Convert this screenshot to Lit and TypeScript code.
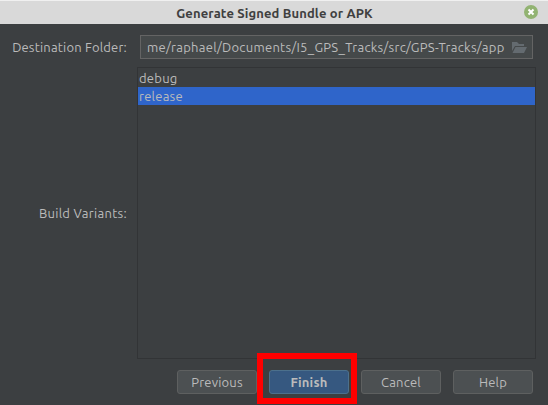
import { LitElement, html, css } from "lit";
import { customElement } from "lit/decorators.js";

@customElement("app-root")
export class AppRoot extends LitElement {
  static styles = css`
    :host {
      display: flex;
      flex-direction: column;
      box-sizing: border-box;
      width: 548px;
      height: 405px;
      overflow: hidden;
      background: #3c3f41;
      color: #bbbbbb;
      font: 13px/18px "Ubuntu", "Noto Sans", sans-serif;
      white-space: nowrap;
    }
    *, *::after { box-sizing: border-box; }
    .title {
      display: grid;
      grid-template-columns: 38px 1fr 38px;
      align-items: center;
      height: 24px;
      flex: none;
      border-top: 1px solid #f0f0f0;
      background: #d9d9d9;
      color: #404040;
      font-weight: 600;
      text-align: center;
    }
    .caption { grid-column: 2; letter-spacing: 0.13px; padding-left: 1px; }
    .close { display: block; margin-left: 14px; margin-bottom: 1px; }
    .form {
      display: grid;
      grid-template-columns: 127px 399px;
      column-gap: 10px;
      grid-template-rows: 24px 292px;
      row-gap: 8px;
      padding-top: 11px;
    }
    .label { align-self: center; text-align: right; }
    .dest { letter-spacing: 0.18px; }
    .variants { letter-spacing: 0.29px; }
    .path { letter-spacing: 0.29px; }
    .field {
      display: flex;
      align-items: center;
      justify-content: space-between;
      margin: 0 3px;
      padding: 0 5px 0 6px;
      background: #45494a;
      border: 1px solid #646464;
    }
    .list { border: 1px solid #323436; padding-top: 1px; }
    .row { height: 18px; padding-left: 1px; padding-top: 1px; line-height: 17px; letter-spacing: 0.25px; }
    .selected { background: #2f65ca; }
    .buttons {
      display: flex;
      gap: 12px;
      padding: 11px 0 0 177px;
    }
    .button {
      position: relative;
      width: 80px;
      height: 24px;
      border: 1px solid #5e6060;
      border-radius: 3px;
      background: #4c5052;
      line-height: 23px;
      text-align: center;
      letter-spacing: 0.2px;
    }
    .primary { background: #365880; border-color: #4c708c; font-weight: 600; }
    .primary::after {
      content: "";
      position: absolute;
      left: -13px;
      top: -18px;
      width: 100px;
      height: 51px;
      border: 6px solid #ff0000;
    }
  `;

  render() {
    return html`
      <div class="title">
        <span class="caption">Generate Signed Bundle or APK</span>
        <svg class="close" width="14" height="14" viewBox="0 0 14 14">
          <circle cx="7" cy="7" r="7" fill="#92b372" />
          <path d="M4.5 4.5l5 5M9.5 4.5l-5 5" stroke="#fff" stroke-width="2" />
        </svg>
      </div>
      <div class="form">
        <span class="label dest">Destination Folder:</span>
        <div class="field">
          <span class="path">me/raphael/Documents/I5_GPS_Tracks/src/GPS-Tracks/app</span>
          <svg width="15" height="11" viewBox="0 0 15 11" fill="#646b70">
            <path d="M0 9V0H5L7 2H12V4H3Z" />
            <path d="M3.5 5H15L12 11H0.5Z" />
          </svg>
        </div>
        <span class="label variants">Build Variants:</span>
        <div class="list">
          <div class="row debug">debug</div>
          <div class="row selected release">release</div>
        </div>
      </div>
      <div class="buttons">
        <div class="button">Previous</div>
        <div class="button primary">Finish</div>
        <div class="button">Cancel</div>
        <div class="button">Help</div>
      </div>
    `;
  }
}
